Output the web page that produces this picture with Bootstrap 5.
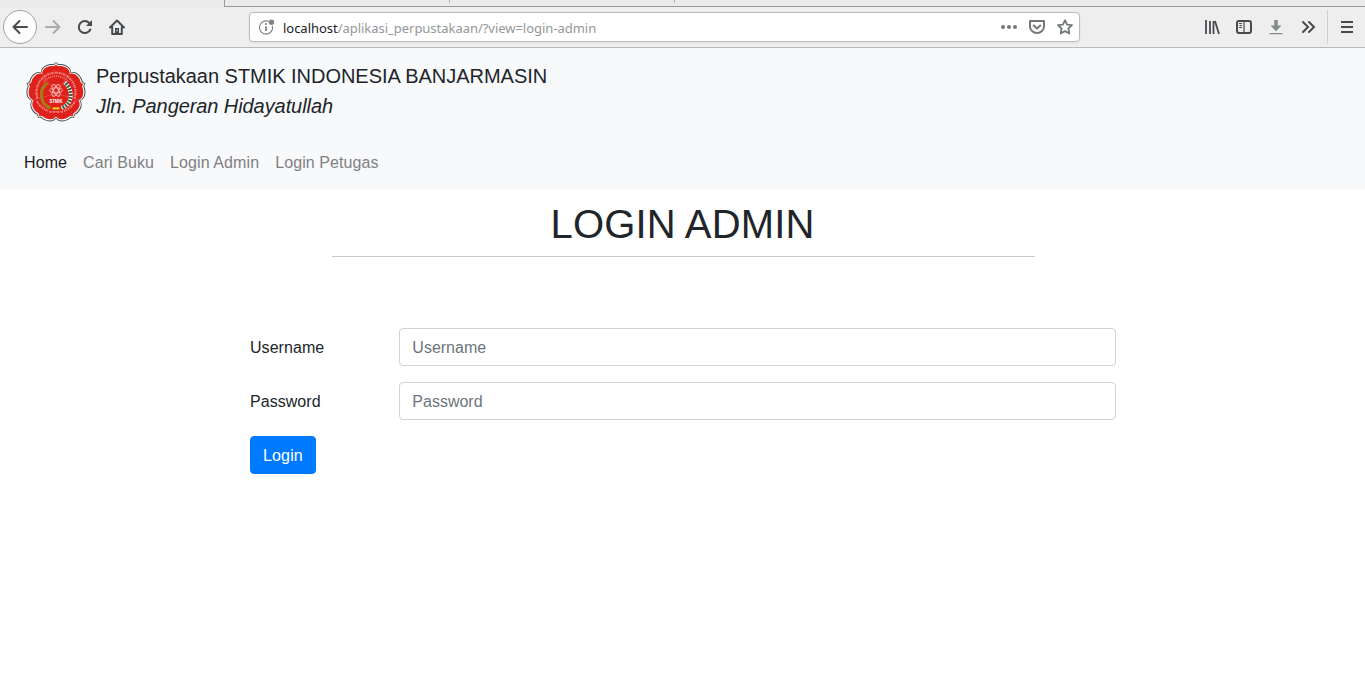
<!DOCTYPE html>
<html lang="id">
<head>
<meta charset="utf-8">
<meta name="viewport" content="width=device-width, initial-scale=1">
<title>Login Admin</title>
<link href="https://cdn.jsdelivr.net/npm/bootstrap@5.3.0/dist/css/bootstrap.min.css" rel="stylesheet">
<style>
body{font-family:"Liberation Sans",Arial,sans-serif;color:#212529;height:674px;overflow:hidden}
svg{display:block;flex:none}
.tabstrip{height:7px;background:#ebebeb;padding-left:224px}
.tabstrip-in{height:7px;border-left:1px solid #999;border-bottom:1px solid #999}
.tabstrip-in i{width:225px;height:3px;border-right:1px solid #b5b5b5}
.toolbar{height:41px;background:#eee;border-bottom:1px solid #b9b9b9;color:#474b4f}
.backbtn{width:34px;height:34px;margin-left:3px;border:1px solid #a3a3a3;border-radius:50%;background:#fcfcfc}
.urlbar{width:831px;height:30px;margin-left:124px;background:#fff;border:1px solid #bbb;border-radius:4px;font:13px "Noto Sans","Open Sans",sans-serif;letter-spacing:-.03px;color:#939799;box-shadow:0 1px 3px #0001}
.urlbar span{padding-top:2px}
.urlbar b{font-weight:400;color:#202326}
.tb-sep{width:1px;height:34px;background:#d0d0d0}
.site-head{height:142px;background:#f8f9fb;padding:8px 24px}
.site-brand{font-size:20px;line-height:30px;margin-top:5px;letter-spacing:-.03px}
.site-brand i{letter-spacing:-.08px}
.site-nav{margin-top:20px;gap:16px}
.site-nav .nav-link{padding:8px 0;color:#7f8081;line-height:24px;letter-spacing:.09px}
.site-nav .nav-link.active{color:#1a1b1c}
.title-block{width:703px;margin-left:332px;padding-top:10px}
.title-block h1{font-size:40px;line-height:48px;margin:0 2px 0 0;font-weight:400;letter-spacing:.15px}
.title-block hr{margin:8px 0 0;opacity:1;border-color:#c9c9c9}
.login-form{width:866px;margin:71px 0 0 250px}
.login-form .row{--bs-gutter-x:30px}
.login-form .col-form-label{padding-top:8px;padding-bottom:6px;letter-spacing:.05px}
.login-form .form-control{border-color:#ced4da;border-radius:4px;height:38px;padding-top:7px;padding-bottom:6px}
.login-form .form-control::placeholder{color:#6c757d}
.login-form .btn{background:#007bff;border-color:#007bff;border-radius:4px;padding-top:7px;padding-bottom:5px;letter-spacing:.15px}
</style>
<script defer src="https://cdn.jsdelivr.net/npm/bootstrap@5.3.0/dist/js/bootstrap.bundle.min.js"></script>
</head>
<body class="bg-white">
<div class="tabstrip"><div class="tabstrip-in d-flex"><i></i><i></i></div></div>
<div class="toolbar d-flex align-items-center">
  <div class="backbtn d-flex align-items-center justify-content-center">
    <svg width="16" height="16" viewBox="0 0 16 16" fill="none" stroke="currentColor" stroke-width="2" stroke-linecap="round" stroke-linejoin="round"><path d="M15 8H1.5M7.5 2l-6 6 6 6"/></svg>
  </div>
  <svg style="margin-left:8px" width="16" height="16" viewBox="0 0 16 16" fill="none" stroke="#ababab" stroke-width="2" stroke-linecap="round" stroke-linejoin="round"><path d="M1 8h13.500M8.500 2l6 6-6 6"/></svg>
  <svg style="margin-left:16px" width="16" height="16" viewBox="0 0 16 16" fill="none" stroke="currentColor" stroke-width="2" stroke-linecap="round"><path d="M13.300 10.500A6 6 0 1 1 12.200 4"/><path d="M15 1v6H9z" fill="currentColor" stroke="none"/></svg>
  <svg style="margin-left:16px" width="16" height="16" viewBox="0 0 16 16" fill="none" stroke="currentColor" stroke-width="2" stroke-linecap="round" stroke-linejoin="round"><path d="M1 8.500L8 1.500l7 7M3.200 8v7h9.600V8"/><path d="M6 9h4v6H6z" fill="currentColor" stroke="none"/><path d="M8 11v1" stroke="#eee" stroke-width="1"/></svg>
  <div class="urlbar d-flex align-items-center">
    <svg style="margin-left:8px" width="17" height="17" viewBox="0 0 17 17" fill="none" stroke="#808486"><path d="M10.500 2.400A6.600 6.600 0 1 0 14.400 6.800" stroke-width="1.200"/><path d="M8 7.500V12" stroke-width="1.800"/><circle cx="8" cy="5" r="1.100" fill="#808486" stroke="none"/><circle cx="13.500" cy="3.300" r="2.700" fill="#808486" stroke="none"/></svg>
    <span style="margin-left:8px"><b>localhost</b>/aplikasi_perpustakaan/?view=login-admin</span>
    <svg class="ms-auto" width="16" height="16" viewBox="0 0 16 16" fill="#74787a"><circle cx="2" cy="8" r="2"/><circle cx="8" cy="8" r="2"/><circle cx="14" cy="8" r="2"/></svg>
    <svg style="margin-left:12px" width="16" height="16" viewBox="0 0 16 16" fill="none" stroke="#74787a" stroke-width="2" stroke-linecap="round" stroke-linejoin="round"><path d="M1 2h14v5.500a7 6.500 0 0 1-14 0zM4.700 6.500L8 9.600l3.300-3.100"/></svg>
    <svg style="margin:0 6px 0 12px" width="16" height="16" viewBox="0 0 16 16" fill="none" stroke="#74787a" stroke-width="1.800" stroke-linejoin="round"><path d="M8 1.200l2.100 4.400 4.900.6-3.600 3.300.9 5L8 12.100l-4.300 2.400.9-5L1 6.200l4.900-.6z"/></svg>
  </div>
  <svg style="margin-left:124px" width="16" height="16" viewBox="0 0 16 16" fill="none" stroke="currentColor" stroke-width="2"><path d="M2 1v14M6 2v13M9.500 2v13M11 2l4 13" stroke-width="1.800"/></svg>
  <svg style="margin-left:16px" width="16" height="16" viewBox="0 0 16 16" fill="none" stroke="currentColor" stroke-width="2"><rect x="1" y="2" width="14" height="12" rx="2"/><path d="M8 2v12" stroke-width="1.200"/><path d="M3 4.500h3M3.500 6.500H6M3 8.500h3" stroke-width="1"/></svg>
  <svg style="margin-left:16px" width="16" height="16" viewBox="0 0 16 16" fill="#7d8c8c"><path d="M6.300 1h3.400v5.500h3.800L8 12.300 2.500 6.500h3.800zM1.500 14h13v1.200h-13z"/></svg>
  <svg style="margin-left:16px" width="16" height="16" viewBox="0 0 16 16" fill="none" stroke="currentColor" stroke-width="2" stroke-linecap="round"><path d="M3 3l5 5-5 5M9 3l5 5-5 5"/></svg>
  <div class="tb-sep" style="margin-left:11px"></div>
  <svg style="margin-left:11px" width="16" height="16" viewBox="0 0 16 16" fill="none" stroke="currentColor" stroke-width="2"><path d="M2 3h12M2 8h12M2 13h12"/></svg>
</div>
<header class="site-head">
  <div class="d-flex">
    <svg style="margin:5px 8px 0 0" width="64" height="62" viewBox="-32 -31 64 62" aria-label="Logo STMIK">
      <defs><path id="petal" d="M0 0L-15-20.600C-15-27.500-6.500-29.500-3-28.900Q-1-29 0-31Q1-29 3-28.900C6.500-29.500 15-27.500 15-20.600Z"/>
      <g id="flower"><use href="#petal"/><use href="#petal" transform="rotate(72)"/><use href="#petal" transform="rotate(144)"/><use href="#petal" transform="rotate(216)"/><use href="#petal" transform="rotate(288)"/></g></defs>
      <g transform="translate(0 .4)">
        <use href="#flower" fill="#4d4d4d" transform="translate(0 .5)"/>
        <use href="#flower" fill="#fff" transform="translate(0 .5) scale(.965)"/>
        <use href="#flower" fill="#df211c" transform="translate(0 .5) scale(.925)"/>
        <g fill="none">
          <path d="M-18.500 6A19.500 19.500 0 1 1 18.500 6" stroke="#f2948e" stroke-width="2.200" stroke-dasharray="1.500 .7 .9 .9"/>
          <path d="M-12.500-10.500A16.500 16.500 0 0 1 12.500-10.500" stroke="#ea716b" stroke-width="1.700" stroke-dasharray="1.200 .8"/>
          <path d="M-19 9A21 21 0 0 0-8 18.500M-6.500 19.500H7M8 18.500A21 21 0 0 0 19 9" stroke="#f2948e" stroke-width="1.900" stroke-dasharray="1.500 .7 .9 .9"/>
          <path d="M-8.500-9.500C-17-4-17 12-5.500 15.500" stroke="#a77a16" stroke-width="3.200"/>
          <path d="M8.500-10C17.500-3 17 12 5.500 15.500" stroke="#f4eee8" stroke-width="4" stroke-dasharray="1.700 1.300"/>
          <path d="M8.500-10C17.500-3 17 12 5.500 15.500" stroke="#167458" stroke-width="2.800" stroke-dasharray="1.700 1.300" stroke-dashoffset="1.200"/>
          <path d="M-3.500 16H3.500" stroke="#f5d51c" stroke-width="2"/>
          <g stroke="#ffbdb6" stroke-width=".9" transform="translate(0 -2)"><ellipse rx="6.500" ry="2.500"/><ellipse rx="6.500" ry="2.500" transform="rotate(60)"/><ellipse rx="6.500" ry="2.500" transform="rotate(120)"/></g>
        </g>
        <text x="0" y="10.500" font-size="4.500" font-weight="700" text-anchor="middle" textLength="13" lengthAdjust="spacingAndGlyphs" fill="#fff">STMIK</text>
      </g>
    </svg>
    <div class="site-brand">Perpustakaan STMIK INDONESIA BANJARMASIN<br><i>Jln. Pangeran Hidayatullah</i></div>
  </div>
  <nav class="nav site-nav">
    <a class="nav-link active" href="#">Home</a>
    <a class="nav-link" href="#">Cari Buku</a>
    <a class="nav-link" href="#">Login Admin</a>
    <a class="nav-link" href="#">Login Petugas</a>
  </nav>
</header>
<main>
  <div class="title-block text-center"><h1>LOGIN ADMIN</h1><hr></div>
  <form class="login-form">
    <div class="row mb-3"><label class="col-2 col-form-label" for="user">Username</label><div class="col-10"><input id="user" class="form-control" placeholder="Username"></div></div>
    <div class="row mb-3"><label class="col-2 col-form-label" for="pass">Password</label><div class="col-10"><input id="pass" type="password" class="form-control" placeholder="Password"></div></div>
    <button type="button" class="btn btn-primary">Login</button>
  </form>
</main>
</body>
</html>
